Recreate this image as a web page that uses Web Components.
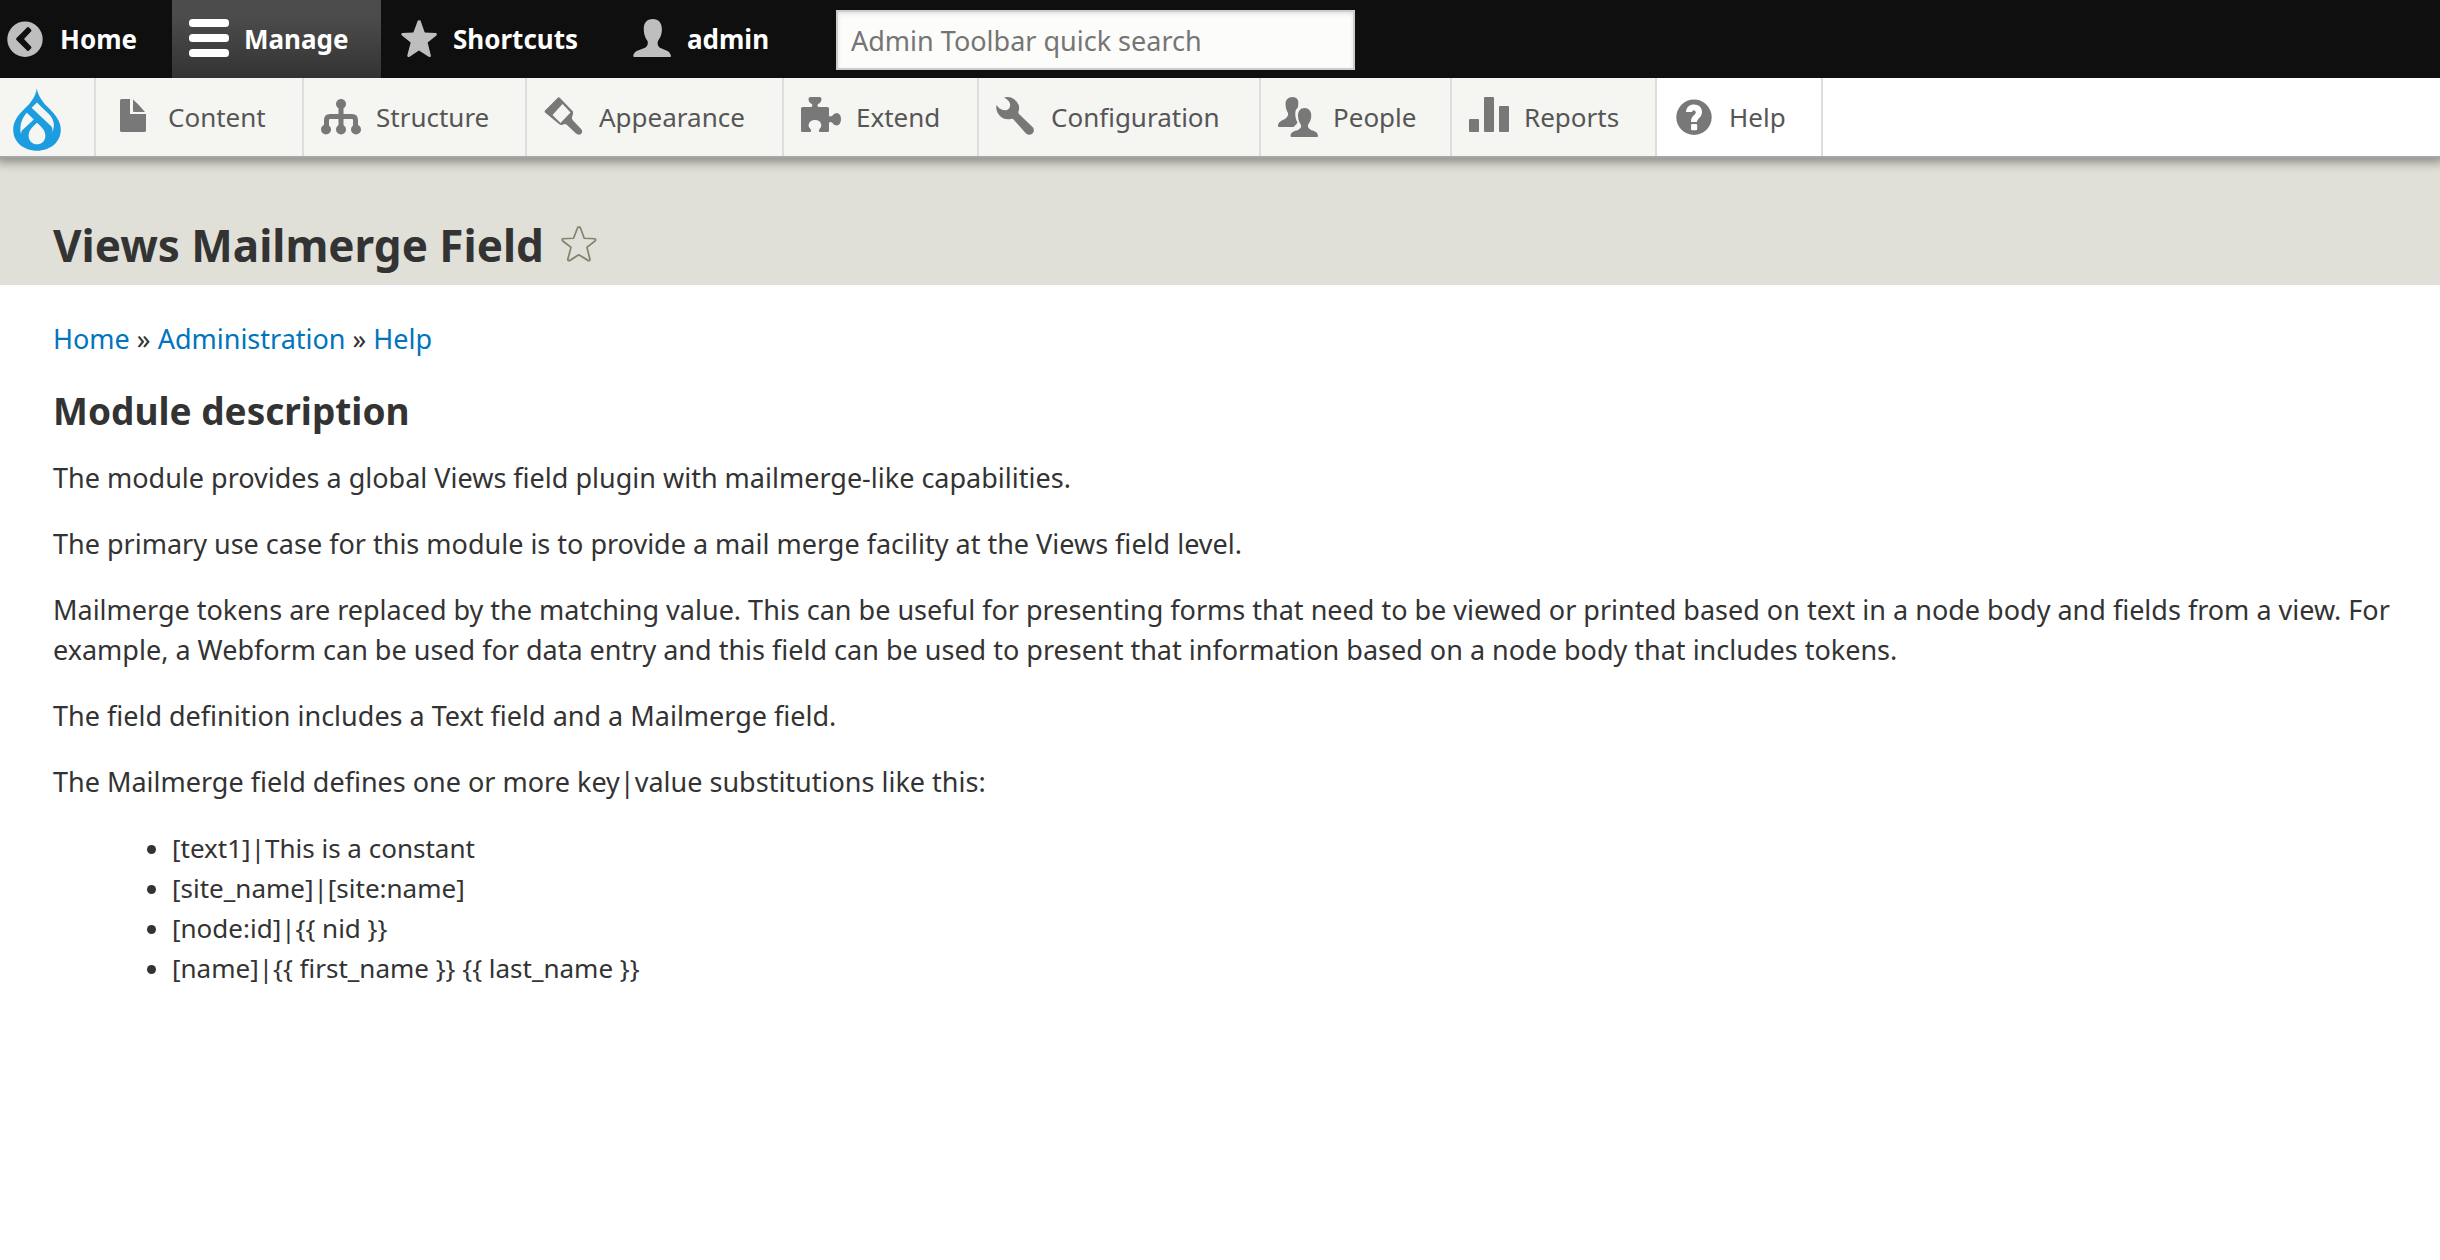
<!DOCTYPE html>
<html lang="en">
<head>
<meta charset="utf-8">
<title>Views Mailmerge Field</title>
<style>
  body {
    margin: 0;
    background: #fff;
    color: #333;
    font-family: "Lucida Grande", "Noto Sans", "Open Sans", sans-serif;
    font-size: 27px;
    line-height: 40px;
  }
</style>
</head>
<body>
<admin-toolbar>
  <toolbar-item icon="back" style="--width: 172px; --indent: 5px; --gap: 15px">Home</toolbar-item>
  <toolbar-item icon="menu" active style="--width: 209px">Manage</toolbar-item>
  <toolbar-item icon="star" style="--width: 234px">Shortcuts</toolbar-item>
  <toolbar-item icon="user" style="--width: 221px">admin</toolbar-item>
  <toolbar-search label="Admin Toolbar quick search"></toolbar-search>
</admin-toolbar>
<admin-tray>
  <toolbar-item icon="drupal" label="Tools" style="--width: 96px; --indent: 12px; --icon-width: 50px; --icon-height: 68px"></toolbar-item>
  <toolbar-item icon="file" style="--width: 208px">Content</toolbar-item>
  <toolbar-item icon="tree" style="--width: 223px">Structure</toolbar-item>
  <toolbar-item icon="brush" style="--width: 257px">Appearance</toolbar-item>
  <toolbar-item icon="puzzle" style="--width: 195px">Extend</toolbar-item>
  <toolbar-item icon="wrench" style="--width: 282px">Configuration</toolbar-item>
  <toolbar-item icon="people" style="--width: 191px">People</toolbar-item>
  <toolbar-item icon="bars" style="--width: 205px">Reports</toolbar-item>
  <toolbar-item icon="help" active style="--width: 166px">Help</toolbar-item>
</admin-tray>
<page-header>Views Mailmerge Field</page-header>
<help-page>
  <bread-crumb slot="breadcrumb" trail="Home,Administration,Help"></bread-crumb>
  <help-section heading="Module description">
    <p>The module provides a global Views field plugin with mailmerge-like capabilities.</p>
    <p>The primary use case for this module is to provide a mail merge facility at the Views field level.</p>
    <p>Mailmerge tokens are replaced by the matching value. This can be useful for presenting forms that need to be viewed or printed based on text in a node body and fields from a view. For example, a Webform can be used for data entry and this field can be used to present that information based on a node body that includes tokens.</p>
    <p>The field definition includes a Text field and a Mailmerge field.</p>
    <p>The Mailmerge field defines one or more key|value substitutions like this:</p>
    <ul>
      <li>[text1]|This is a constant</li>
      <li>[site_name]|[site:name]</li>
      <li>[node:id]|{{ nid }}</li>
      <li>[name]|{{ first_name }} {{ last_name }}</li>
    </ul>
  </help-section>
</help-page>

<script>
(function() {
  const STAR = "M20 1.500 Q18.700 0.500 18 2.500 L13.800 13.500 L2 14 Q0.500 14.500 2 16.500 L11 23.500 L7.500 36.500 Q7.500 38.500 9.500 38 L19.500 31.500 L30 38 Q32 38.500 31.800 36.500 L28.500 23.500 L37.500 16.500 Q38.800 14.500 37 14 L25.500 13.500 L21.500 2.500 Q21 0.800 20 1.500 Z";

  const ICONS = {
    back: '<path fill-rule="evenodd" d="M20 2.500a17.700 17.700 0 1 0 0 35.400a17.700 17.700 0 1 0 0-35.400zM22 8.600q1-1 2 0l2 2q1 1 0 2L19 20l7 7.400q1 1 0 2l-2 2q-1 1-2 0L11.500 21q-1-1 0-2z"/>',
    menu: '<rect y="0" width="40" height="8" rx="3.500"/><rect y="15" width="40" height="8" rx="3.500"/><rect y="30" width="40" height="8" rx="3.500"/>',
    star: `<path transform="translate(2 0) scale(.97 1)" d="${STAR}"/>`,
    user: '<path d="M20.800 0C15 0 11.500 4 11.800 10.500C12 16 13.500 19 15.500 22C16.200 24 16 26.500 13.500 28.500C9 31 2 31 1.200 37Q1.200 38 2.500 38H38Q39.300 38 39 37C38 31 31.500 31 27.500 28.500C25.500 26.500 25.200 24 26 22C28 19 29.800 16 29.900 10.500C30 4 26.500 0 20.800 0Z"/>',
    drupal: '<g transform="translate(0 4) scale(2 1.930)"><path d="M12.400.6C12 4.700 9.300 8.400 6.500 11C2.800 14.700.6 18 .6 22C.6 28.600 5.900 33 12.500 33S24.400 28.600 24.400 22C24.400 18 22 14.700 18.500 11C15.700 8.400 13 4.700 12.400.6Z"/><path fill="#f5f5f2" d="M12.500 8L9.800 10.800L19.600 20.300C20.400 21.300 20.500 22.800 19.500 24.200C21.500 21.500 21.600 17.500 18.700 14.200C16.600 12 14.400 10.200 12.500 8ZM7.400 13.300L10.900 16.800L5 22.600C4.700 23.200 4.500 23.900 4.500 24.500C3.600 20.500 4.700 16.200 7.400 13.300ZM12.500 18.500C10.300 20.500 8.300 22.500 8.300 25.200C8.300 27.800 10.200 29.700 12.500 29.700S16.700 27.800 16.700 25.200C16.700 22.500 14.700 20.500 12.500 18.500Z"/></g>',
    file: '<path d="M8.500 2H17V17H33V33.500Q33 35 31.500 35H8.500Q7 35 7 33.500V3.500Q7 2 8.500 2ZM20 2.500Q26.500 8 32 15H21Q20 15 20 14Z"/>',
    tree: '<circle cx="20" cy="7" r="5"/><circle cx="5" cy="32.500" r="5"/><circle cx="20" cy="32.500" r="5"/><circle cx="35" cy="32.500" r="5"/><path fill="none" stroke="currentColor" stroke-width="5" d="M20 8V32M5.500 31V23Q5.500 19.500 9 19.500H31Q34.500 19.500 34.500 23V31"/>',
    brush: '<path fill-rule="evenodd" d="M14 .5Q15 0 16 1L29 14.500Q29.500 17 28 20Q27.500 22 29 23.500L37.500 32.500Q39 35 37 37Q34.500 38.500 32 36.500L23 28Q21.500 26.500 20 27.300Q17 29 15 27L1 15.500Q0 14.500 1 13.500ZM18.500 7L8.500 18L16.500 26L26.500 15.500Z"/>',
    puzzle: '<path d="M1.500 10H10Q12 9.500 11 7Q7.500 5.500 7.500 2Q7.500 0 9.500 0H18.500Q20.500 0 20.500 2Q20.500 5.500 17 7Q15.500 9.500 18 10H26.500Q28 10 28 11.500V18.500Q28.500 20.500 31.500 18.500Q33 16 36 16Q40 17 40 22Q40 27.500 36 28.500Q33 28.500 31.500 26Q28.500 24 28 26V33.500Q28 35 26.500 35H18.500Q17 34 18.500 32Q20.500 30.500 20.300 28Q19.500 23 14 23Q8.500 23 7.500 28Q7.500 30.500 9.500 32Q11 34 9.500 35H1.500Q0 35 0 33.500V11.500Q0 10 1.500 10Z"/>',
    wrench: '<path d="M8 .6Q15-1.500 20.500 4.500Q24.500 9 22.500 14.500Q22 16 23 17L37 30.500Q39 33.500 36.500 36.500Q33 39 30 36.500L17.500 22.500Q16.500 21.500 15 22Q8.500 23.500 3.500 18.500Q-1 13.500 .7 8Q2.500 11.500 5.500 12.500Q8 13.500 11 13Q14 11.500 14.200 8Q14.200 4 8 .6Z"/>',
    people: '<path d="M14.500 0C10 0 7.500 3 7.500 7C7.500 11.500 9 14 10 16C10.500 18 9.500 20 7 22C4 23.500 0 24.500 0 29Q0 30 1 30H15.500C17 28.500 18.500 27.500 19.500 25.500C18 23 17 19 17.300 15.500Q17.500 12.500 19.800 10.500C21.500 3.500 19.500 0 14.500 0Z"/><path d="M26.500 11C22.500 11 20 14 20 18.500C20 23 21.500 25.500 23 28C23.500 30 22.500 31.500 20 33C16.500 34 12.500 35 12.500 39Q12.500 40 13.500 40H39Q40 40 40 39C40 35 36 34 33 33C30.500 31.500 29.500 30 30 28C31.500 25.500 33.300 23 33.300 18.500C33.300 14 30.500 11 26.500 11Z"/>',
    bars: '<rect x="0" y="22" width="10" height="13" rx="1"/><rect x="15" y="0" width="10" height="35" rx="1"/><rect x="30" y="9" width="10" height="26" rx="1"/>',
    help: '<path fill-rule="evenodd" d="M20 2.500a17.700 17.700 0 1 0 0 35.400a17.700 17.700 0 1 0 0-35.400zM12 15C12.300 10 15.500 7.500 20 7.500C25 7.500 28 10.500 28 15C28 20.500 23 21.500 23 25H17C17 18.500 21.800 18.500 21.800 15.300Q21.500 13.300 20 13.300Q18.200 13.300 18 15ZM18.200 27H22Q23.200 27 23.200 28.200V32Q23.200 33.200 22 33.200H18.200Q17 33.200 17 32V28.200Q17 27 18.200 27Z"/>',
    favorite: `<path fill="none" stroke="currentColor" stroke-width="1.900" transform="translate(1 1) scale(.91)" d="${STAR}"/>`
  };

  class AdminIcon extends HTMLElement {
    connectedCallback() {
      const name = this.getAttribute("name");
      const box = name === "drupal" ? "0 0 50 68" : "0 0 40 40";
      this.attachShadow({ mode: "open" }).innerHTML = `
        <style>
          :host {
            display: block;
            flex: none;
            width: var(--icon-width, 40px);
            height: var(--icon-height, 40px);
          }
          svg {
            display: block;
            width: 100%;
            height: 100%;
            fill: currentColor;
          }
        </style>
        <svg viewBox="${box}" aria-hidden="true">${ICONS[name]}</svg>`;
    }
  }

  class ToolbarItem extends HTMLElement {
    connectedCallback() {
      const label = this.getAttribute("label");
      this.attachShadow({ mode: "open" }).innerHTML = `
        <style>
          :host {
            display: flex;
            flex: none;
            box-sizing: border-box;
            width: var(--width);
            border-right: var(--divider, none);
            font-size: 26px;
          }
          :host([active]) {
            background: var(--active-background);
          }
          a {
            display: flex;
            align-items: center;
            flex: 1;
            gap: var(--gap, 15px);
            padding-left: var(--indent, 17px);
            color: inherit;
            text-decoration: none;
            white-space: nowrap;
          }
          admin-icon {
            color: var(--icon-color);
          }
          :host([active]) admin-icon {
            color: var(--active-icon-color);
          }
          :host([icon="drupal"]) admin-icon {
            color: #1b9de0;
          }
        </style>
        <a href="#"${label ? ` aria-label="${label}"` : ""}>
          <admin-icon name="${this.getAttribute("icon")}"></admin-icon>
          <slot></slot>
        </a>`;
    }
  }

  class ToolbarSearch extends HTMLElement {
    connectedCallback() {
      const label = this.getAttribute("label");
      this.attachShadow({ mode: "open" }).innerHTML = `
        <style>
          :host {
            display: flex;
            align-items: center;
            padding-top: 2px;
          }
          input {
            box-sizing: border-box;
            width: 519px;
            height: 60px;
            padding: 0 13px;
            border: 2px solid #ccc;
            border-radius: 0;
            background: #fcfcfa;
            box-shadow: inset 0 2px 4px rgba(0, 0, 0, 0.1);
            color: #333;
            font: inherit;
            font-weight: normal;
          }
          input::placeholder {
            color: #757575;
            opacity: 1;
          }
        </style>
        <input type="search" aria-label="${label}" placeholder="${label}">`;
    }
  }

  class AdminToolbar extends HTMLElement {
    connectedCallback() {
      this.attachShadow({ mode: "open" }).innerHTML = `
        <style>
          :host {
            display: block;
            background: #0f0f0f;
            color: #fff;
            font-weight: bold;
            --icon-color: #bebebe;
            --active-icon-color: #fff;
            --active-background: linear-gradient(#4c4c4c 20%, #333);
          }
          nav {
            display: flex;
            min-height: 78px;
          }
        </style>
        <nav aria-label="Toolbar"><slot></slot></nav>`;
    }
  }

  class AdminTray extends HTMLElement {
    connectedCallback() {
      this.attachShadow({ mode: "open" }).innerHTML = `
        <style>
          :host {
            display: block;
            position: relative;
            background: #fff;
            border-bottom: 2px solid #a6a6a6;
            box-shadow: 0 0 10px 4px rgba(0, 0, 0, 0.4);
            clip-path: inset(0 0 -20px 0);
            color: #565656;
            --icon-color: #787878;
            --active-icon-color: #787878;
            --active-background: #fff;
            --divider: 2px solid #ddd;
          }
          nav {
            display: flex;
            min-height: 78px;
          }
          ::slotted(toolbar-item:not([active])) {
            background: #f5f5f2;
          }
        </style>
        <nav aria-label="Administration menu"><slot></slot></nav>`;
    }
  }

  class PageHeader extends HTMLElement {
    connectedCallback() {
      this.attachShadow({ mode: "open" }).innerHTML = `
        <style>
          :host {
            display: flex;
            align-items: center;
            gap: 16px;
            padding: 59px 53px 12px;
            background: #e0e0d8;
          }
          h1 {
            margin: 0;
            font-size: 44px;
            line-height: 56px;
          }
          button {
            padding: 0;
            border: 0;
            background: none;
            color: #84846b;
            cursor: pointer;
          }
        </style>
        <h1><slot></slot></h1>
        <button type="button" aria-label="Add to Default shortcuts"><admin-icon name="favorite"></admin-icon></button>`;
    }
  }

  class BreadCrumb extends HTMLElement {
    connectedCallback() {
      const links = this.getAttribute("trail").split(",").map(text => `<a href="#">${text}</a>`);
      this.attachShadow({ mode: "open" }).innerHTML = `
        <style>
          :host {
            display: block;
          }
          a {
            color: #0074bd;
            text-decoration: none;
          }
        </style>
        <nav aria-label="Breadcrumb">${links.join(" » ")}</nav>`;
    }
  }

  class HelpPage extends HTMLElement {
    connectedCallback() {
      this.attachShadow({ mode: "open" }).innerHTML = `
        <style>
          :host {
            display: block;
            padding: 34px 40px 40px 53px;
          }
          main {
            margin-top: 28px;
          }
        </style>
        <slot name="breadcrumb"></slot>
        <main><slot></slot></main>`;
    }
  }

  class HelpSection extends HTMLElement {
    connectedCallback() {
      this.attachShadow({ mode: "open" }).innerHTML = `
        <style>
          :host {
            display: block;
          }
          h2 {
            margin: 0 0 23px;
            font-size: 37px;
            line-height: 48px;
          }
          ::slotted(p) {
            margin: 0 0 26px;
          }
          ::slotted(ul) {
            margin: 0;
            padding-left: 119px;
            font-size: 26px;
          }
        </style>
        <h2>${this.getAttribute("heading")}</h2>
        <slot></slot>`;
    }
  }

  window.customElements.define("admin-icon", AdminIcon);
  window.customElements.define("toolbar-item", ToolbarItem);
  window.customElements.define("toolbar-search", ToolbarSearch);
  window.customElements.define("admin-toolbar", AdminToolbar);
  window.customElements.define("admin-tray", AdminTray);
  window.customElements.define("page-header", PageHeader);
  window.customElements.define("bread-crumb", BreadCrumb);
  window.customElements.define("help-page", HelpPage);
  window.customElements.define("help-section", HelpSection);
})();
</script>
</body>
</html>
